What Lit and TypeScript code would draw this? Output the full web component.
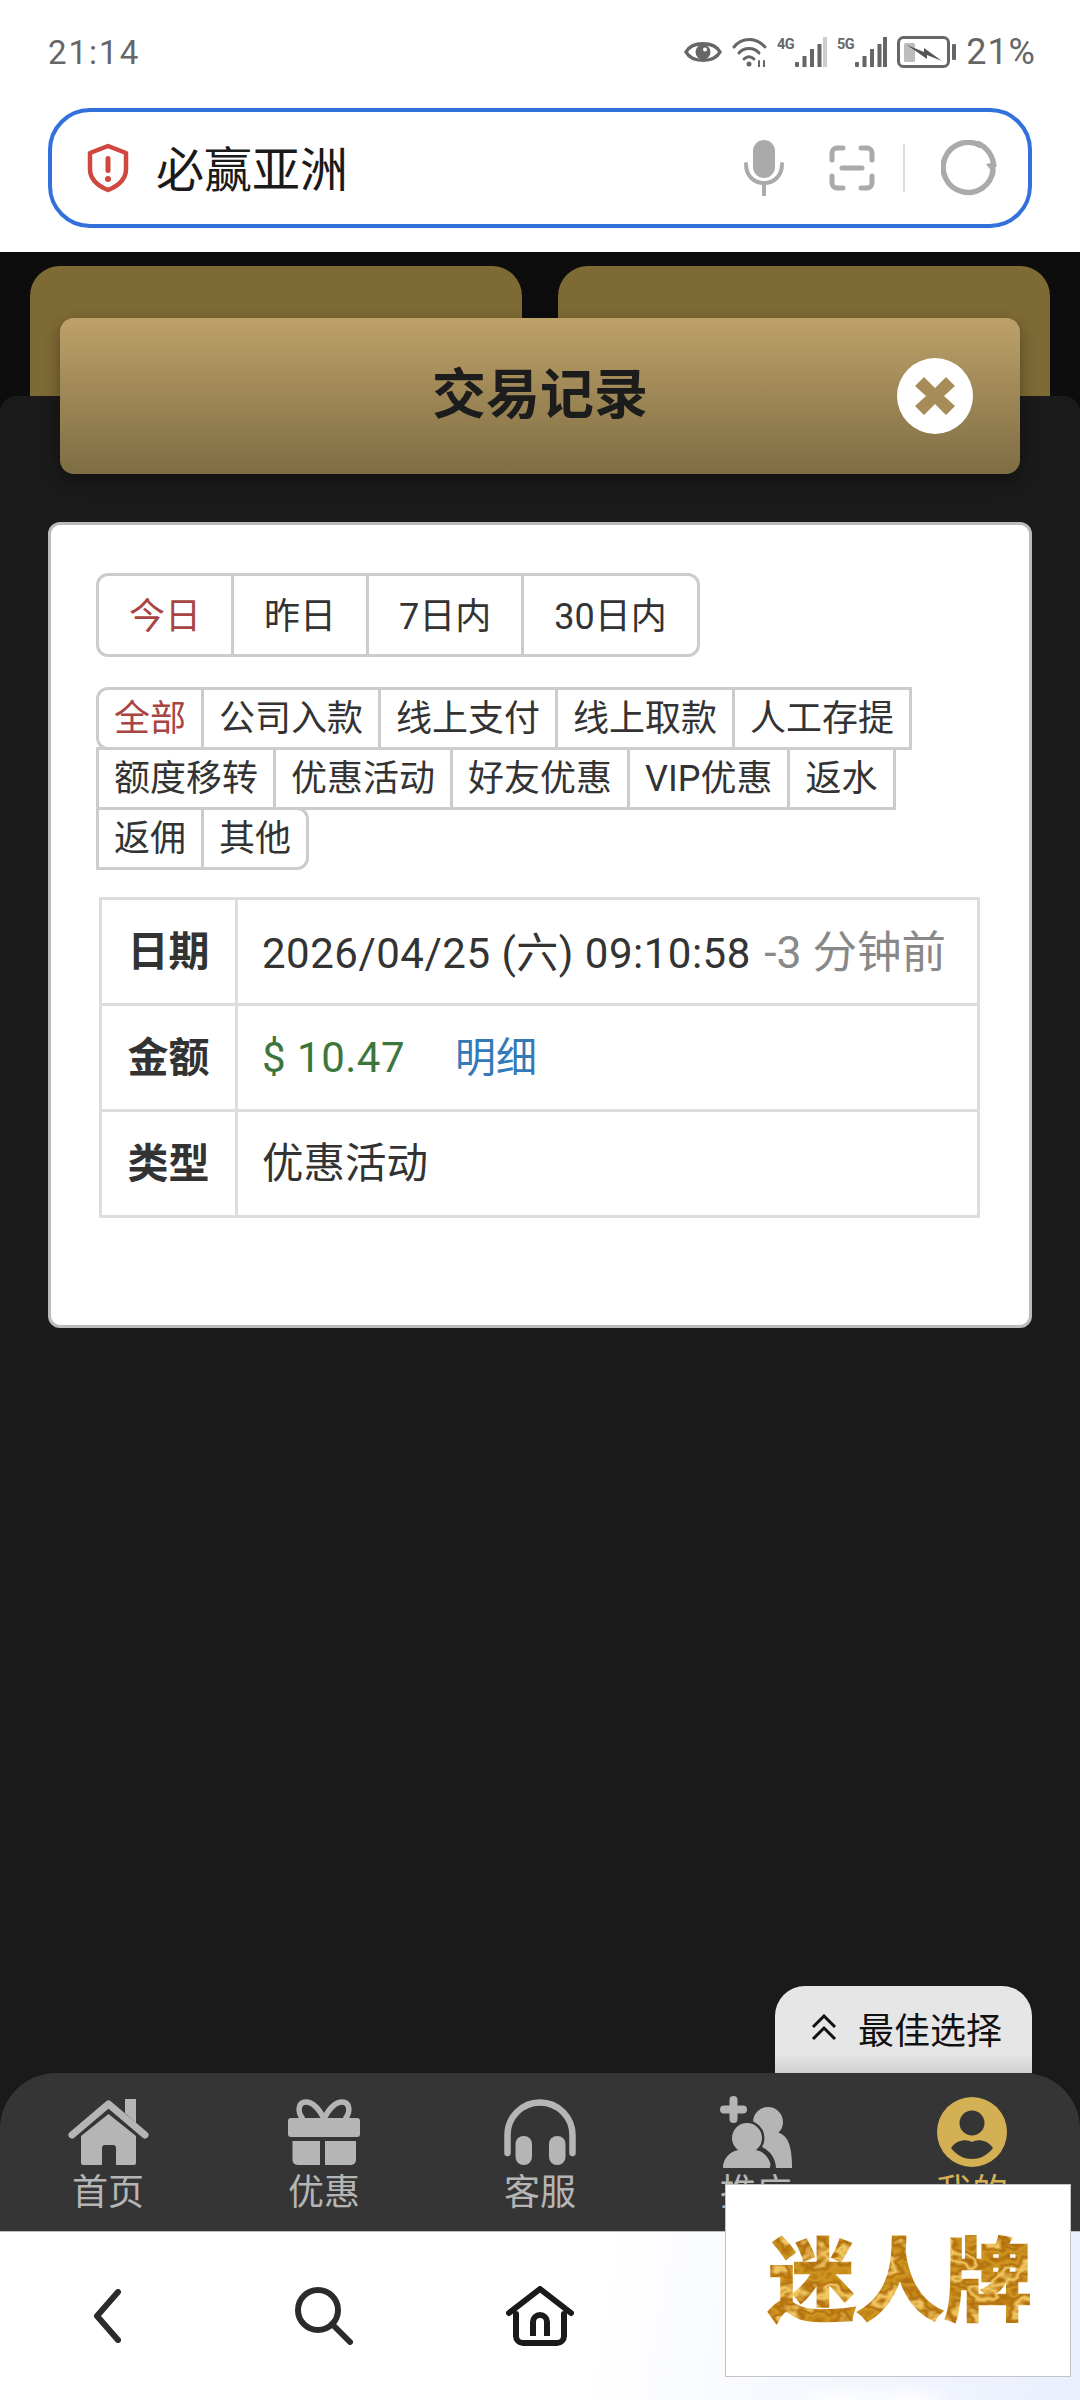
import { LitElement, html, css, svg } from 'lit';
import { customElement, state } from 'lit/decorators.js';

const RANGES = ['今日', '昨日', '7日内', '30日内'];
const TYPES = [
  '全部', '公司入款', '线上支付', '线上取款', '人工存提',
  '额度移转', '优惠活动', '好友优惠', 'VIP优惠', '返水',
  '返佣', '其他',
];

const NAV_ICONS = {
  home: svg`<svg width="81" height="66" viewBox="0 0 81 66" fill="#b5b5b5">
    <path d="M57 0 H68 V24 L57 14 Z"/>
    <path d="M4 36 L40.500 5 L77 36" fill="none" stroke="#b5b5b5" stroke-width="7" stroke-linecap="round" stroke-linejoin="round"/>
    <path d="M13 37 L40.500 15 L68 37 V64 a2 2 0 0 1 -2 2 H48 V49 a3 3 0 0 0 -3 -3 H37 a3 3 0 0 0 -3 3 V66 H15 a2 2 0 0 1 -2 -2 Z"/>
  </svg>`,
  gift: svg`<svg width="72" height="66" viewBox="0 0 72 66" fill="#b5b5b5">
    <path d="M36 20 C31 9 24 3 18 3 C10 3 9 13 15 20 M36 20 C41 9 48 3 54 3 C62 3 63 13 57 20" fill="none" stroke="#b5b5b5" stroke-width="5.500"/>
    <rect x="0" y="19" width="72" height="19" rx="3"/>
    <path d="M4.500 42 H32 V66 H9.500 a5 5 0 0 1 -5 -5 Z"/>
    <path d="M37 42 H68 V61 a5 5 0 0 1 -5 5 H37 Z"/>
  </svg>`,
  headset: svg`<svg width="72" height="66" viewBox="0 0 72 66" fill="#b5b5b5">
    <path d="M3.500 54 V36 a32.500 32.500 0 0 1 65 0 V54" fill="none" stroke="#b5b5b5" stroke-width="6.500" stroke-linecap="round"/>
    <rect x="11.500" y="37" width="16.500" height="29" rx="8"/>
    <rect x="45" y="37" width="16.500" height="29" rx="8"/>
  </svg>`,
  invite: svg`<svg width="72" height="72" viewBox="0 0 72 72" fill="#b5b5b5">
    <path d="M13.500 4 V23 M4 13.500 H23" fill="none" stroke="#b5b5b5" stroke-width="8" stroke-linecap="round"/>
    <circle cx="48" cy="26" r="15"/>
    <path d="M36 36 H56 C68 38 72 50 72 72 H40 Z"/>
    <circle cx="27" cy="42" r="15" stroke="#353535" stroke-width="5"/>
    <path d="M0.500 72 C1 62 8 53 18 52 H36 C46 53 53 62 53.500 72 Z" stroke="#353535" stroke-width="5"/>
    <circle cx="27" cy="42" r="15"/>
    <path d="M3 72 C3 63 10 55 19 54 H35 C44 55 50 63 50 72 Z"/>
  </svg>`,
  me: svg`<svg width="70" height="70" viewBox="0 0 70 70">
    <circle cx="35" cy="35" r="35" fill="#d4b055"/>
    <circle cx="35" cy="26" r="12.500" fill="#353535"/>
    <path d="M14 51 C20 42 30 42 35 45 C40 42 50 42 56 51 C50 59 42 62 35 62 C28 62 20 59 14 51 Z" fill="#353535"/>
  </svg>`,
};

@customElement('app-root')
export class AppRoot extends LitElement {
  @state() private _range = 0;
  @state() private _type = 0;

  static styles = css`
    :host {
      display: block;
      width: 1080px;
      height: 2400px;
      position: relative;
      overflow: hidden;
      background: #fff;
      font-family: Roboto, "Noto Sans CJK SC", sans-serif;
      color: #333;
    }
    svg { display: block; flex: none; }
    .screen { display: flex; flex-direction: column; height: 100%; }

    /* phone chrome */
    .status {
      height: 108px;
      box-sizing: border-box;
      padding: 33px 45px 0 48px;
      display: flex;
      justify-content: space-between;
      align-items: flex-start;
      color: #666;
      font-size: 33px;
      line-height: 40px;
      letter-spacing: 2px;
    }
    .status-icons { display: flex; align-items: center; height: 40px; gap: 10px; margin-top: -1px; }
    .pct { font-size: 36px; letter-spacing: 1px; margin-right: -1px; }
    .url-wrap { height: 144px; box-sizing: border-box; padding: 0 48px; }
    .url {
      height: 120px;
      box-sizing: border-box;
      border: 4px solid #3271dc;
      border-radius: 42px;
      display: flex;
      align-items: center;
      padding: 0 31px 0 34px;
    }
    .url-text { margin-left: 26px; padding-bottom: 5px; font-size: 48px; color: #1a1a1a; flex: 1; }
    .url-tools { display: flex; align-items: center; }
    .scan { margin-left: 45px; }
    .url-sep { width: 2px; height: 48px; background: #ddd; margin: 0 36px 0 28px; }

    /* page */
    .page {
      flex: 1;
      display: flex;
      flex-direction: column;
      background: #0d0d0d;
      min-height: 0;
    }
    .tabs {
      height: 144px;
      box-sizing: border-box;
      padding: 14px 30px 0;
      display: grid;
      grid-template-columns: 1fr 1fr;
      gap: 36px;
    }
    .tabs div { background: #7e6a35; border-radius: 30px 30px 0 0; }
    .panel {
      flex: 1;
      display: flex;
      flex-direction: column;
      background: #1a1a1a;
      border-radius: 16px 16px 0 0;
      min-height: 0;
    }
    .header {
      height: 156px;
      box-sizing: border-box;
      padding-bottom: 12px;
      margin: -78px 60px 0;
      border-radius: 14px;
      background: linear-gradient(#bda169, #7f6d43);
      box-shadow: 0 6px 16px rgba(0, 0, 0, 0.35);
      display: flex;
      align-items: center;
      justify-content: center;
      position: relative;
      color: #1c1c1c;
      font-size: 54px;
      font-weight: 700;
    }
    .close {
      position: absolute;
      right: 47px;
      top: 40px;
      width: 76px;
      height: 76px;
      border-radius: 50%;
      background: #fff;
      display: flex;
      align-items: center;
      justify-content: center;
    }

    .card {
      margin: 48px 48px 0;
      background: #fff;
      border: 3px solid #bbb;
      border-radius: 12px;
      padding: 48px 45px 107px;
    }
    .ranges { display: inline-flex; vertical-align: top; }
    .range {
      height: 84px;
      box-sizing: border-box;
      padding: 0 30px 4px;
      margin-right: -3px;
      border: 3px solid #ccc;
      display: flex;
      align-items: center;
      font-size: 36px;
      cursor: pointer;
    }
    .range:first-child { border-radius: 12px 0 0 12px; }
    .range:last-child { border-radius: 0 12px 12px 0; margin-right: 0; }
    .on { color: #a94442; }

    .chips { display: flex; flex-wrap: wrap; margin: 30px 0 0; padding-bottom: 3px; }
    .chip {
      height: 63px;
      box-sizing: border-box;
      padding: 0 15px 7px;
      margin: 0 -3px -3px 0;
      border: 3px solid #ccc;
      display: flex;
      align-items: center;
      font-size: 36px;
      cursor: pointer;
    }
    .chip.first { border-radius: 12px 0 0 12px; }
    .chip.last { border-radius: 0 12px 12px 0; }

    table {
      width: 881px;
      margin: 27px 0 0 3px;
      border-collapse: collapse;
      font-size: 42px;
    }
    td, th { border: 3px solid #ddd; height: 106px; box-sizing: border-box; padding: 0 24px 7px; text-align: left; white-space: nowrap; }
    th { width: 136px; padding: 0 0 7px; text-align: center; font-weight: 700; font-size: 41px; }
    .spaced { letter-spacing: 0.500px; }
    .ago { color: #888; font-size: 44.500px; margin-left: 3px; }
    .amount { color: #3c763d; }
    .detail { color: #337ab7; margin-left: 50px; font-size: 41px; }
    .plain { font-size: 41.500px; }

    .spacer { flex: 1; }
    .best {
      align-self: flex-end;
      margin-right: 48px;
      width: 257px;
      height: 87px;
      box-sizing: border-box;
      padding: 16px 30px 0 35px;
      border-radius: 30px 30px 0 0;
      background: linear-gradient(#e6e6e6 78%, #cfcfcf);
      display: flex;
      align-items: flex-start;
      gap: 20px;
      font-size: 36px;
      line-height: 60px;
      color: #111;
      white-space: nowrap;
    }
    .best svg { margin-top: 12px; }

    .tabbar {
      height: 158px;
      box-sizing: border-box;
      padding-top: 22px;
      background: #353535;
      border-radius: 56px 56px 0 0;
      display: grid;
      grid-template-columns: repeat(5, 1fr);
    }
    .tab {
      display: flex;
      flex-direction: column;
      align-items: center;
      color: #b5b5b5;
      font-size: 36px;
      line-height: 48px;
    }
    .tab .ico { height: 74px; display: flex; align-items: center; }
    .tab.active { color: #d4b055; }

    .sysnav {
      height: 169px;
      flex: none;
      display: grid;
      grid-template-columns: repeat(5, 216px);
      align-items: center;
      justify-items: center;
      background:
        radial-gradient(50px 18px at 840px 168px, #fff, transparent),
        radial-gradient(50px 18px at 910px 168px, #fff, transparent),
        linear-gradient(100deg, #fff 55%, #e9effd 100%);
      border-top: 1px solid #bbb;
      box-sizing: border-box;
    }
    .back { margin-right: 3px; }

    .logo {
      position: absolute;
      left: 725px;
      top: 2184px;
      width: 346px;
      height: 193px;
      box-sizing: border-box;
      background: #fff;
      border: 1px solid #c4c4c8;
    }
  `;

  private _statusIcons() {
    return html`
      <svg width="38" height="22" viewBox="0 0 38 22">
        <path d="M2 11 C8 0 30 0 36 11 C30 22 8 22 2 11 Z" fill="none" stroke="#666" stroke-width="3.500"/>
        <circle cx="19" cy="11" r="7.500" fill="#666"/>
        <circle cx="21" cy="8.500" r="2" fill="#fff"/>
      </svg>
      <svg width="35" height="30" viewBox="0 0 35 30" fill="none" stroke="#666" stroke-width="3" stroke-linecap="round">
        <path d="M2 10 C10 0 24 0 33 10"/>
        <path d="M7 16 C12 10 22 10 27 16"/>
        <path d="M12 22 C15 19 19 19 22 22"/>
        <circle cx="17" cy="27" r="2.500" fill="#666" stroke="none"/>
        <path d="M27 24 v6 M32 24 v6" stroke-width="2"/>
      </svg>
      ${this._signal('4G', true)}
      ${this._signal('5G', false)}
      <svg width="59" height="32" viewBox="0 0 59 32">
        <rect x="1.500" y="1.500" width="50" height="29" rx="5" fill="none" stroke="#666" stroke-width="3"/>
        <rect x="7" y="7" width="11" height="19" rx="1.500" fill="#bdbdbd"/>
        <path d="M10 9 L27 16 L27 12 L45 25 L30 19 L30 23 Z" fill="#555"/>
        <rect x="55" y="8" width="4" height="16" rx="1" fill="#666"/>
      </svg>
      <span class="pct">21%</span>
    `;
  }

  private _signal(label: string, dimLast: boolean) {
    return html`<svg width="50" height="30" viewBox="0 0 50 30">
      <text x="0" y="12" font-size="14.500" font-weight="700" letter-spacing="-0.500" font-family="Roboto, sans-serif" fill="#666">${label}</text>
      <rect x="18" y="25" width="4" height="5" rx="1" fill="#666"/>
      <rect x="25.500" y="19" width="4" height="11" fill="#666"/>
      <rect x="33" y="12" width="4" height="18" fill="#666"/>
      <rect x="40.500" y="7" width="4" height="23" fill="#666"/>
      <rect x="46" y="0" width="4" height="30" fill="${dimLast ? '#ccc' : '#666'}"/>
    </svg>`;
  }

  render() {
    const tabs = [
      { icon: NAV_ICONS.home, label: '首页' },
      { icon: NAV_ICONS.gift, label: '优惠' },
      { icon: NAV_ICONS.headset, label: '客服' },
      { icon: NAV_ICONS.invite, label: '推广' },
      { icon: NAV_ICONS.me, label: '我的', active: true },
    ];
    return html`
      <div class="screen">
        <div class="status">
          <span>21:14</span>
          <div class="status-icons">${this._statusIcons()}</div>
        </div>
        <div class="url-wrap">
          <div class="url">
            <svg width="44" height="50" viewBox="0 0 44 50">
              <path d="M22 3 L40 10 V26 C40 36 32 43 22 47 C12 43 4 36 4 26 V10 Z" fill="none" stroke="#d0473f" stroke-width="4.500" stroke-linejoin="round"/>
              <rect x="19.500" y="13" width="5" height="17" rx="2.500" fill="#d0473f"/>
              <circle cx="22" cy="36" r="3" fill="#d0473f"/>
            </svg>
            <span class="url-text">必赢亚洲</span>
            <div class="url-tools">
              <svg width="40" height="56" viewBox="0 0 40 56" fill="none" stroke="#aaa" stroke-width="4" stroke-linecap="round">
                <rect x="9" y="0" width="22" height="38" rx="11" fill="#aaa" stroke="none"/>
                <path d="M2 24 C2 36 10 43 20 43 C30 43 38 36 38 24"/>
                <path d="M20 43 V55"/>
              </svg>
              <svg class="scan" width="46" height="46" viewBox="0 0 46 46" fill="none" stroke="#aaa" stroke-width="5" stroke-linecap="round">
                <path d="M3 15 V8 a5 5 0 0 1 5 -5 H14"/>
                <path d="M32 3 H38 a5 5 0 0 1 5 5 V15"/>
                <path d="M3 31 V38 a5 5 0 0 0 5 5 H14"/>
                <path d="M32 43 H38 a5 5 0 0 0 5 -5 V31"/>
                <path d="M13 23 H33"/>
              </svg>
              <div class="url-sep"></div>
              <svg width="56" height="56" viewBox="0 0 56 56" fill="none" stroke="#aaa" stroke-width="5.500">
                <path d="M52 30 A25 25 0 1 1 40 6"/>
                <path d="M36 3 C46 7 52 16 53 27"/>
                <path d="M45 24 L54 36 L55 22 Z" fill="#aaa" stroke="none"/>
              </svg>
            </div>
          </div>
        </div>

        <div class="page">
          <div class="tabs"><div></div><div></div></div>
          <div class="panel">
            <div class="header">
              交易记录
              <div class="close">
                <svg width="42" height="40" viewBox="0 0 42 40">
                  <path d="M1 10 L10 1 L21 12 L32 1 L41 10 L30 20 L41 30 L32 39 L21 28 L10 39 L1 30 L12 20 Z" fill="#a58c58"/>
                </svg>
              </div>
            </div>

            <div class="card">
              <div class="ranges">
                ${RANGES.map((r, i) => html`<div class="range ${i === this._range ? 'on' : ''}" @click=${() => (this._range = i)}>${r}</div>`)}
              </div>
              <div class="chips">
                ${TYPES.map((t, i) => html`<div
                  class="chip ${i === this._type ? 'on' : ''} ${i === 0 ? 'first' : ''} ${i === TYPES.length - 1 ? 'last' : ''}"
                  @click=${() => (this._type = i)}>${t}</div>`)}
              </div>
              <table>
                <tr><th>日期</th><td><span class="spaced">2026/04/25 (六) 09:10:58</span> <span class="ago">-3 分钟前</span></td></tr>
                <tr><th>金额</th><td><span class="amount spaced">$ 10.47</span><span class="detail">明细</span></td></tr>
                <tr><th>类型</th><td class="plain">优惠活动</td></tr>
              </table>
            </div>

            <div class="spacer"></div>
            <div class="best">
              <svg width="28" height="26" viewBox="0 0 28 26" fill="none" stroke="#111" stroke-width="3">
                <path d="M3 13 L14 2 L25 13"/>
                <path d="M3 25 L14 14 L25 25"/>
              </svg>
              <span>最佳选择</span>
            </div>
            <div class="tabbar">
              ${tabs.map((t) => html`<div class="tab ${t.active ? 'active' : ''}">
                <div class="ico">${t.icon}</div>
                <span>${t.label}</span>
              </div>`)}
            </div>
          </div>
        </div>

        <div class="sysnav">
          <svg class="back" width="28" height="54" viewBox="0 0 28 54" fill="none" stroke="#2b2b2b" stroke-width="6" stroke-linecap="round" stroke-linejoin="round">
            <path d="M25 3 L4 27 L25 51"/>
          </svg>
          <svg width="58" height="58" viewBox="0 0 58 58" fill="none" stroke="#2b2b2b" stroke-width="6" stroke-linecap="round">
            <circle cx="23" cy="23" r="20"/>
            <path d="M37 37 L55 55"/>
          </svg>
          <svg width="68" height="60" viewBox="0 0 68 60" fill="none" stroke="#1a1a1a" stroke-width="6" stroke-linecap="round" stroke-linejoin="round">
            <path d="M3 27 L34 3 L65 27"/>
            <path d="M10 28 V50 a7 7 0 0 0 7 7 H51 a7 7 0 0 0 7 -7 V28"/>
            <path d="M27 50 V36 a7 7 0 0 1 14 0 V50" stroke-linecap="butt"/>
          </svg>
        </div>
      </div>

      <div class="logo">
        <svg width="344" height="191" viewBox="0 0 344 191">
          <defs>
            <filter id="gold" x="-5%" y="-5%" width="110%" height="110%" color-interpolation-filters="sRGB">
              <feTurbulence type="fractalNoise" baseFrequency="0.035 0.05" numOctaves="3" seed="7" result="n"/>
              <feColorMatrix in="n" type="matrix" values="1 0 0 0 0  1 0 0 0 0  1 0 0 0 0  0 0 0 0 1"/>
              <feComponentTransfer result="tex">
                <feFuncR type="table" tableValues="0.6 0.62 0.72 0.82 0.7 0.96 0.72 0.62 0.6"/>
                <feFuncG type="table" tableValues="0.38 0.4 0.46 0.6 0.44 0.8 0.46 0.38 0.36"/>
                <feFuncB type="table" tableValues="0.04 0.05 0.06 0.14 0.05 0.4 0.06 0.04 0.03"/>
              </feComponentTransfer>
              <feComposite in="tex" in2="SourceAlpha" operator="in"/>
            </filter>
          </defs>
          <text x="42" y="128" font-size="90" font-weight="700" textLength="264" lengthAdjust="spacingAndGlyphs"
            font-family="'Noto Sans CJK SC', sans-serif" stroke="#000" stroke-width="2.500" filter="url(#gold)">迷人牌</text>
        </svg>
      </div>
    `;
  }
}

declare global {
  interface HTMLElementTagNameMap {
    'app-root': AppRoot;
  }
}
